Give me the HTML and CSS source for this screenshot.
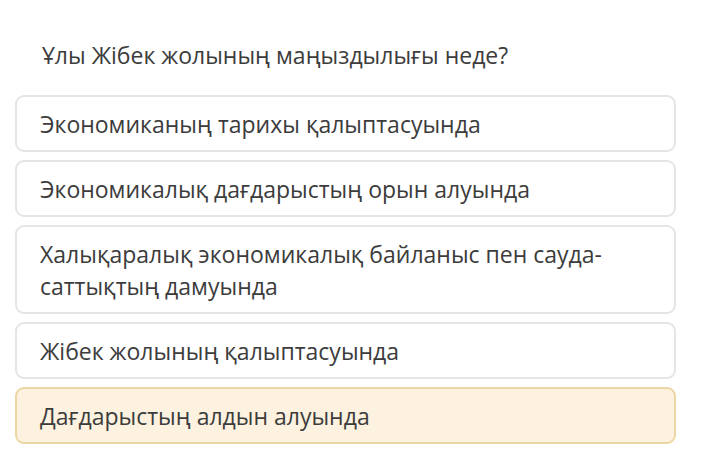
FILE: index.html
```html
<!DOCTYPE html>
<html lang="kk">

<head>
    <meta charset="UTF-8">
    <meta name="viewport" content="width=device-width, initial-scale=1.0">
    <title>Тест</title>
    <link rel="stylesheet" href="styles.css">
</head>

<body>
    <main class="quiz">
        <h1 class="question">Ұлы Жібек жолының маңыздылығы неде?</h1>

        <ul class="answers">
            <li class="answer">Экономиканың тарихы қалыптасуында</li>
            <li class="answer">Экономикалық дағдарыстың орын алуында</li>
            <li class="answer">Халықаралық экономикалық байланыс пен сауда-саттықтың дамуында</li>
            <li class="answer">Жібек жолының қалыптасуында</li>
            <li class="answer selected">Дағдарыстың алдын алуында</li>
        </ul>
    </main>
</body>

</html>
```

FILE: styles.css
```css
/* Reset */
* {
    margin: 0;
    padding: 0;
    box-sizing: border-box;
}

body {
    font-family: 'Open Sans', 'Noto Sans', sans-serif;
    color: #3c3c3c;
    background-color: #ffffff;
}

.quiz {
    padding: 40px 30px 0 15px;
}

.question {
    font-size: 23px;
    font-weight: 400;
    line-height: 31px;
    padding-left: 27px;
    margin-bottom: 24px;
}

.answers {
    list-style: none;
    display: flex;
    flex-direction: column;
    gap: 8px;
}

.answer {
    border: 2px solid #e5e5e5;
    border-radius: 9px;
    padding: 11px 40px 10px 23px;
    font-size: 23px;
    line-height: 32px;
    background: #fff;
}

.answer.selected {
    background: #fcf2df;
    border-color: #ecd6a3;
}
```
